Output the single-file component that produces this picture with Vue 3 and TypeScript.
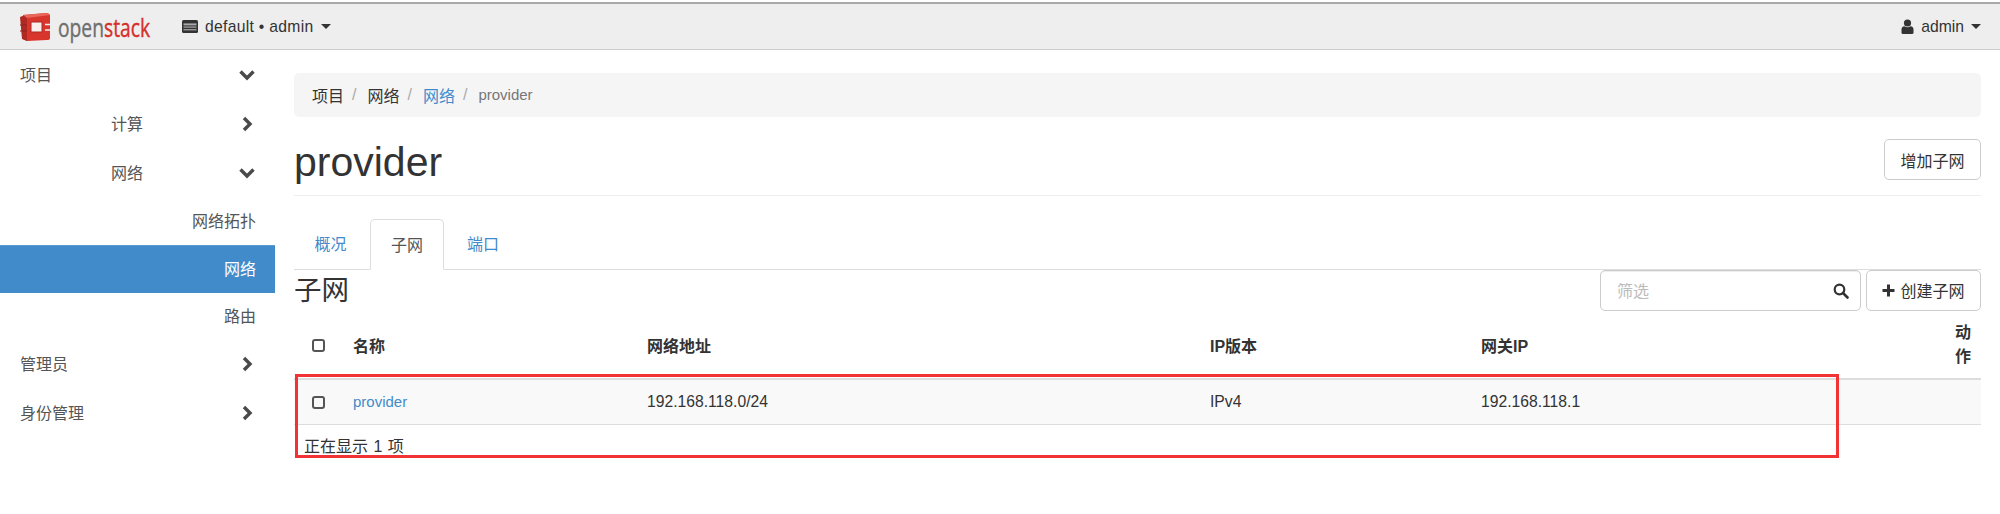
<script setup lang="ts">
const columns = [
  { label: '名称', cls: 'c-name' },
  { label: '网络地址', cls: 'c-net' },
  { label: 'IP版本', cls: 'c-ver' },
  { label: '网关IP', cls: 'c-gw' },
]
</script>

<template>
  <div class="page">
    <header class="nav">
      <div class="brand">
        <svg class="logo" width="34" height="30" viewBox="0 0 34 30">
          <path d="M5 3 L28 1 Q32 1 32 4 V26 Q32 28 29 28 L9 29 L5 27 Z" fill="#d8352c"/>
          <path d="M2 5 L7 3 L9 6 V29 L4 27 Z" fill="#b02a24"/>
          <path d="M5 3 L28 1 L32 3 L9 6 Z" fill="#e9665a"/>
          <rect x="13" y="10" width="11" height="10" fill="#fbeeec"/>
          <path d="M13 10 H24 V20 H13 Z" fill="none" stroke="#a82a24" stroke-width="1"/>
          <path d="M27 12.5 H33 M27 18 H33" stroke="#eee" stroke-width="1.3"/>
          <path d="M2 13 H9 M2 19 H9" stroke="#8e2420" stroke-width="1"/>
        </svg>
        <span class="word"><span class="open">open</span><span class="stack">stack</span></span>
      </div>
      <div class="ctx">
        <svg class="ctx-ico" width="16" height="13" viewBox="0 0 16 13">
          <rect x="0" y="0" width="16" height="13" rx="1.5" fill="#333"/>
          <rect x="1.5" y="3.4" width="13" height="2" fill="#aaa"/>
          <rect x="1.5" y="6.4" width="13" height="1.4" fill="#999"/>
          <rect x="1.5" y="9" width="13" height="1.4" fill="#999"/>
        </svg>
        <span class="ctx-txt">default • admin</span>
        <i class="caret"></i>
      </div>
      <div class="user">
        <svg width="13" height="15" viewBox="0 0 13 15">
          <circle cx="6.5" cy="4" r="3.6" fill="#333"/>
          <path d="M0.5 14 V10.5 Q0.5 7.5 3.5 7.2 Q6.5 9.2 9.5 7.2 Q12.5 7.5 12.5 10.5 V14 Q12.5 15 11 15 H2 Q0.5 15 0.5 14 Z" fill="#333"/>
        </svg>
        <span>admin</span>
        <i class="caret"></i>
      </div>
    </header>

    <div class="body">
      <aside class="side">
        <div class="item top r-tall"><span>项目</span>
          <svg class="chev" width="18" height="12" viewBox="0 0 18 12"><path d="M2.5 2.5 L9 9 L15.5 2.5"/></svg>
        </div>
        <div class="item sub r-tall"><span>计算</span>
          <svg class="chev" width="18" height="16" viewBox="0 0 18 16"><path d="M6 2 L12 8 L6 14"/></svg>
        </div>
        <div class="item sub r-tall"><span>网络</span>
          <svg class="chev" width="18" height="12" viewBox="0 0 18 12"><path d="M2.5 2.5 L9 9 L15.5 2.5"/></svg>
        </div>
        <div class="item leaf r-mid">网络拓扑</div>
        <div class="item leaf r-short active">网络</div>
        <div class="item leaf r-short">路由</div>
        <div class="item top"><span>管理员</span>
          <svg class="chev" width="18" height="16" viewBox="0 0 18 16"><path d="M6 2 L12 8 L6 14"/></svg>
        </div>
        <div class="item top"><span>身份管理</span>
          <svg class="chev" width="18" height="16" viewBox="0 0 18 16"><path d="M6 2 L12 8 L6 14"/></svg>
        </div>
      </aside>

      <main class="main">
        <nav class="crumb">
          <span class="dark">项目</span><span class="sep">/</span>
          <span class="dark">网络</span><span class="sep">/</span>
          <a class="link">网络</a><span class="sep">/</span>
          <span class="cur">provider</span>
        </nav>

        <div class="head">
          <h1>provider</h1>
          <button class="btn">增加子网</button>
        </div>

        <div class="tabs">
          <a class="tab t1">概况</a>
          <a class="tab on">子网</a>
          <a class="tab t3">端口</a>
        </div>

        <div class="section">
          <div class="bar">
            <h2>子网</h2>
            <div class="tools">
              <div class="filter">
                <span class="ph">筛选</span>
                <svg width="16" height="16" viewBox="0 0 16 16"><circle cx="6.5" cy="6.5" r="4.8" fill="none" stroke="#333" stroke-width="2.2"/><path d="M10 10 L14.5 14.5" stroke="#333" stroke-width="2.6" stroke-linecap="round"/></svg>
              </div>
              <button class="btn create">
                <svg width="13" height="13" viewBox="0 0 13 13"><path d="M6.5 0.5 V12.5 M0.5 6.5 H12.5" stroke="#333" stroke-width="3"/></svg>
                创建子网
              </button>
            </div>
          </div>

          <div class="row thead">
            <div class="c-check"><i class="box"></i></div>
            <div v-for="c in columns" :key="c.cls" :class="c.cls">{{ c.label }}</div>
            <div class="c-act">动作</div>
          </div>
          <div class="row tbody">
            <div class="c-check"><i class="box"></i></div>
            <div class="c-name"><a class="link latin">provider</a></div>
            <div class="c-net num">192.168.118.0/24</div>
            <div class="c-ver num">IPv4</div>
            <div class="c-gw num">192.168.118.1</div>
            <div class="c-act"></div>
          </div>
          <div class="foot">正在显示 1 项</div>
          <div class="redbox"></div>
        </div>
      </main>
    </div>
  </div>
</template>

<style>
html, body { margin: 0; background: #fff; }
</style>

<style scoped>
.page {
  width: 2000px;
  height: 514px;
  overflow: hidden;
  font-family: "Liberation Sans", "Noto Sans CJK SC", sans-serif;
  font-size: 16px;
  color: #333;
  background: #fff;
  box-sizing: border-box;
  padding-top: 2px;
}
.nav {
  height: 45px;
  background: #eee;
  border-top: 2px solid #a9a9a9;
  border-bottom: 1px solid #ccc;
  display: flex;
  align-items: center;
  padding: 0 19px 0 18px;
}
.brand { display: flex; align-items: center; gap: 6px; width: 164px; flex: none; }
.word {
  font-family: "Open Sans", sans-serif;
  font-size: 25px;
  display: inline-block;
  width: 92px;
  white-space: nowrap;
  -webkit-text-stroke: 0.4px currentColor;
  transform: scaleX(0.77);
  transform-origin: left center;
}
.open { color: #6f6f6f; }
.stack { color: #d5302a; }
.ctx { display: flex; align-items: center; gap: 7px; font-size: 15.7px; }
.ctx-txt { letter-spacing: 0.3px; }
.user { margin-left: auto; display: flex; align-items: center; gap: 7px; font-size: 15.7px; }
.caret {
  display: block;
  width: 0; height: 0;
  border-left: 5px solid transparent;
  border-right: 5px solid transparent;
  border-top: 5px solid #333;
}
.body { display: flex; }
.side { width: 275px; flex: none; }
.item {
  height: 48.5px;
  display: flex;
  align-items: center;
  justify-content: space-between;
  box-sizing: border-box;
  color: #555;
}
.item > span { margin-bottom: 2px; }
.r-tall { height: 49px; }
.r-mid { height: 48px; }
.r-short { height: 47.5px; }
.top { padding: 0 19px 0 20px; }
.sub { padding: 0 19px 0 111px; }
.leaf { justify-content: flex-end; padding-right: 19px; padding-bottom: 2px; }
.active { background: #428bca; color: #fff; border-top: 1px solid #5b9bd3; }
.chev { fill: none; stroke: #4a4a4a; stroke-width: 3.4; }
.main { flex: none; width: 1687px; margin-left: 19px; padding-top: 23px; }
.crumb {
  height: 44px;
  background: #f5f5f5;
  border-radius: 5px;
  display: flex;
  align-items: center;
  padding-left: 18px;
  padding-bottom: 1px;
  box-sizing: border-box;
}
.sep { color: #aaa; margin: 0 11px 0 8px; }
.dark { color: #333; }
.cur { color: #777; font-size: 15px; }
.link { color: #428bca; }
.latin { font-size: 15px; }
.num { font-size: 15.7px; }
.head {
  height: 79px;
  display: flex;
  align-items: center;
  justify-content: space-between;
  border-bottom: 1px solid #eee;
  box-sizing: border-box;
}
h1 { margin: 12px 0 0; font-weight: 400; font-size: 41px; color: #333; }
.btn {
  font: inherit;
  color: #333;
  background: #fff;
  border: 1px solid #ccc;
  border-radius: 5px;
  height: 41px;
  padding: 0 15.5px;
  display: flex;
  align-items: center;
  gap: 5px;
  box-sizing: border-box;
}
.head .btn { margin-top: 7px; }
.tabs {
  margin-top: 23px;
  height: 51px;
  display: flex;
  border-bottom: 1px solid #ddd;
  box-sizing: border-box;
}
.tab {
  color: #428bca;
  display: flex;
  align-items: center;
  justify-content: center;
  box-sizing: border-box;
  padding-bottom: 2px;
}
.t1 { width: 76px; padding-right: 3px; }
.t3 { width: 78px; }
.tab.on {
  width: 74px;
  color: #555;
  background: #fff;
  border: 1px solid #ddd;
  border-bottom: 1px solid #fff;
  border-radius: 5px 5px 0 0;
  height: 51px;
}
.section { position: relative; }
.bar { display: flex; justify-content: space-between; height: 50px; }
h2 { margin: 0; font-weight: 400; font-size: 27.5px; line-height: 41px; color: #333; }
.tools { display: flex; gap: 5px; }
.filter {
  width: 261px;
  height: 41px;
  border: 1px solid #ccc;
  border-radius: 5px;
  box-shadow: inset 0 1px 1px rgba(0, 0, 0, 0.075);
  box-sizing: border-box;
  display: flex;
  align-items: center;
  justify-content: space-between;
  padding: 0 11px 0 16px;
}
.ph { color: #bbb; margin-bottom: 2px; }
.create { width: 115px; padding: 0 0 1px; justify-content: center; }
.row { display: flex; align-items: center; }
.thead { height: 50px; padding-bottom: 8px; font-weight: 700; border-bottom: 2px solid #ddd; }
.tbody { height: 44px; background: #f9f9f9; border-bottom: 1px solid #ddd; }
.c-check { width: 59px; flex: none; padding-left: 18px; box-sizing: border-box; display: flex; }
.c-name { width: 294px; flex: none; }
.c-net { width: 563px; flex: none; }
.c-ver { width: 271px; flex: none; }
.c-gw { width: 474px; flex: none; }
.c-act { width: 20px; flex: none; line-height: 24px; }
.box {
  display: block;
  width: 13px;
  height: 13px;
  border: 2px solid #555;
  border-radius: 3px;
  box-sizing: border-box;
}
.foot { padding: 12px 0 0 10px; line-height: 20px; word-spacing: 1px; }
.redbox {
  position: absolute;
  left: 1px;
  top: 104px;
  width: 1544px;
  height: 83.5px;
  border: 3.5px solid #f33333;
  box-sizing: border-box;
  pointer-events: none;
}
</style>
